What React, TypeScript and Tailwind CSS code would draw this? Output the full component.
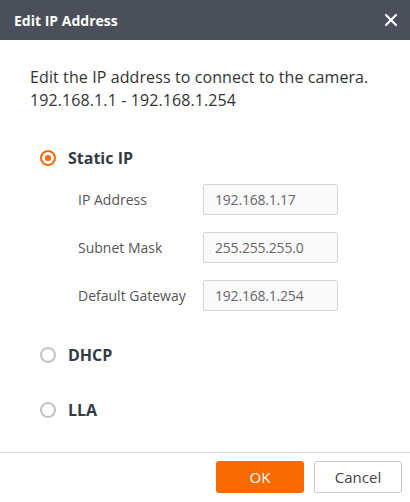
import React from "react";

function Radio({ checked }: { checked: boolean }) {
  return checked ? (
    <span className="flex h-4 w-4 shrink-0 items-center justify-center rounded-full border-2 border-[#f76b0a]">
      <span className="h-[6px] w-[6px] rounded-full bg-[#f76b0a]" />
    </span>
  ) : (
    <span className="h-4 w-4 shrink-0 rounded-full border-2 border-[#c4c4c4]" />
  );
}

function Field({ label, value }: { label: string; value: string }) {
  return (
    <div className="flex h-[31px] items-center">
      <span className="w-[125px] text-[14px] text-[#555555]">{label}</span>
      <div className="flex h-[31px] w-[135px] items-center rounded-[2px] border border-[#d4d4d4] bg-[#fafafa] px-[11px] text-[14px] tracking-[-0.2px] text-[#666666]">
        {value}
      </div>
    </div>
  );
}

export default function App() {
  return (
    <div
      className="flex h-[502px] w-[410px] flex-col bg-white"
      style={{ fontFamily: '"Open Sans", "Noto Sans", sans-serif' }}
    >
      <div className="flex h-[40px] shrink-0 items-center justify-between bg-[#4a4f5a] pl-[14px] pr-[13px]">
        <span className="text-[14px] font-bold text-white">Edit IP Address</span>
        <svg width="12" height="12" viewBox="0 0 12 12" fill="none">
          <path d="M1 1L11 11M11 1L1 11" stroke="white" strokeWidth="2.2" strokeLinecap="square" />
        </svg>
      </div>
      <div className="flex flex-1 flex-col">
        <div className="pl-[30px] pt-[26px] text-[16px] leading-[23px] tracking-[0.1px] text-[#333333]">
          <div>Edit the IP address to connect to the camera.</div>
          <div>192.168.1.1 - 192.168.1.254</div>
        </div>
        <div className="mt-[34px] flex items-center gap-[12px] pl-[40px]">
          <Radio checked />
          <span className="text-[16px] font-bold text-[#333a45]">Static IP</span>
        </div>
        <div className="mt-[14px] flex flex-col gap-[17px] pl-[78px]">
          <Field label="IP Address" value="192.168.1.17" />
          <Field label="Subnet Mask" value="255.255.255.0" />
          <Field label="Default Gateway" value="192.168.1.254" />
        </div>
        <div className="mt-[32px] flex items-center gap-[12px] pl-[40px]">
          <Radio checked={false} />
          <span className="text-[16px] font-bold text-[#333a45]">DHCP</span>
        </div>
        <div className="mt-[31px] flex items-center gap-[12px] pl-[40px]">
          <Radio checked={false} />
          <span className="text-[16px] font-bold text-[#333a45]">LLA</span>
        </div>
      </div>
      <div className="flex h-[50px] shrink-0 items-start justify-end gap-[10px] border-t border-[#e2e2e2] pr-[8px] pt-[8px]">
        <button className="h-[32px] w-[88px] rounded-[3px] bg-[#f76b00] text-[15px] text-white">OK</button>
        <button className="h-[32px] w-[88px] rounded-[3px] border border-[#c8c8c8] bg-white text-[15px] text-[#444444]">
          Cancel
        </button>
      </div>
    </div>
  );
}
